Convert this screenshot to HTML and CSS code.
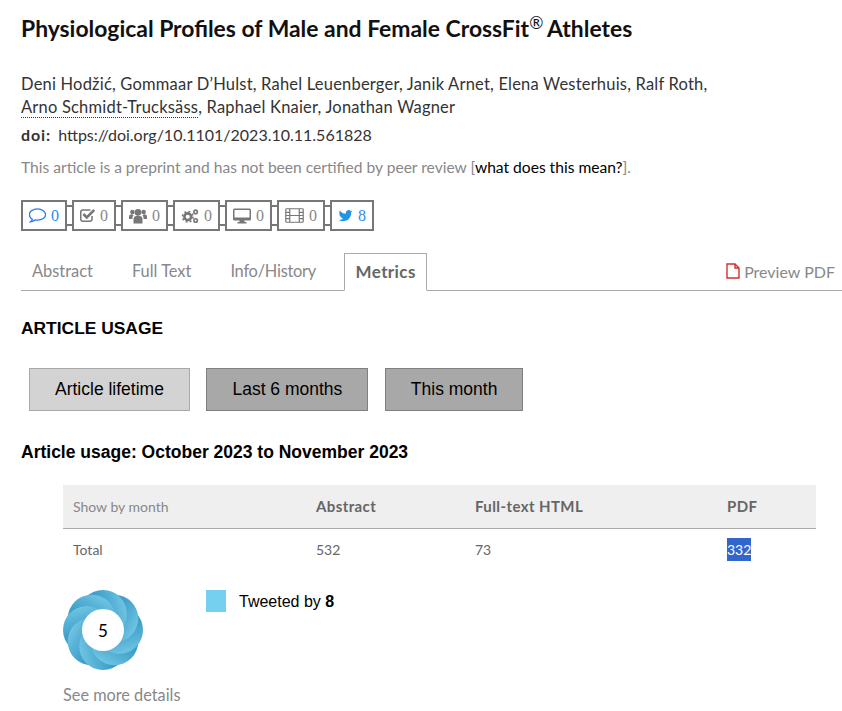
FILE: index.html
```html
<!DOCTYPE html>
<html lang="en">
<head>
<meta charset="utf-8">
<title>Physiological Profiles of Male and Female CrossFit Athletes</title>
<link rel="stylesheet" href="styles.css">
</head>
<body>
<main class="page">
  <h1 class="title">Physiological Profiles of Male and Female CrossFit<sup>®</sup> Athletes</h1>
  <p class="authors">Deni Hodžić, Gommaar D’Hulst, Rahel Leuenberger, Janik Arnet, Elena Westerhuis, Ralf Roth,<br><span class="dotted">Arno Schmidt-Trucksäss</span>, Raphael Knaier, Jonathan Wagner</p>
  <p class="doi"><b>doi:</b> https://doi.org/10.1101/2023.10.11.561828</p>
  <p class="note">This article is a preprint and has not been certified by peer review [<span class="black">what does this mean?</span>].</p>

  <div class="badges">
    <span class="badge blue"><svg class="ic" viewBox="1 3 22 19"><path d="M12 4C6 4 1.500 7.200 1.500 11.500c0 2.500 1.500 4.500 3.800 5.800-.2 1.300-1 2.500-2.300 3.400 2.500-.2 4.700-1.200 6.300-2.600 1 .2 1.800.3 2.700.3 6 0 10.500-3.200 10.500-6.900S18 4 12 4z" fill="none" stroke="#2b7bf0" stroke-width="1.700"/></svg>0</span>
    <i class="link"></i>
    <span class="badge"><svg class="ic slim" viewBox="2 3 20 19"><path d="M18 13v4a3 3 0 0 1-3 3H6a3 3 0 0 1-3-3V8a3 3 0 0 1 3-3h10" fill="none" stroke="#777" stroke-width="2"/><path d="M6.500 10.500 11 15l10-10" fill="none" stroke="#777" stroke-width="3.400"/></svg>0</span>
    <i class="link"></i>
    <span class="badge"><svg class="ic wide" viewBox="0 1 24 22" fill="#777"><circle cx="12" cy="7" r="4.500"/><circle cx="4.500" cy="6.500" r="3"/><circle cx="19.500" cy="6.500" r="3"/><path d="M6 22v-6c0-3 2-4.500 6-4.500s6 1.500 6 4.500v6zM0 16v-3c0-2 1-3.500 4-3.500l2 1.500c-1 1-1.500 3-1.500 5zM24 16v-3c0-2-1-3.500-4-3.500l-2 1.500c1 1 1.500 3 1.500 5z"/></svg>0</span>
    <i class="link"></i>
    <span class="badge"><svg class="ic wide" viewBox="0 0 24 24"><circle cx="9" cy="13" r="4.500" fill="none" stroke="#777" stroke-width="3.400"/><circle cx="9" cy="13" r="7" fill="none" stroke="#777" stroke-width="2.200" stroke-dasharray="2.600 2.900"/><circle cx="19.500" cy="6.500" r="2.300" fill="none" stroke="#777" stroke-width="2.200"/><circle cx="19.500" cy="18" r="2.300" fill="none" stroke="#777" stroke-width="2.200"/></svg>0</span>
    <i class="link"></i>
    <span class="badge"><svg class="ic wide" viewBox="0 1 24 22" fill="#777"><path fill-rule="evenodd" d="M2 2h20a2 2 0 0 1 2 2v12a2 2 0 0 1-2 2h-7l.6 2H18v2H6v-2h2.400l.6-2H2a2 2 0 0 1-2-2V4a2 2 0 0 1 2-2zM2 4v10h20V4z"/></svg>0</span>
    <i class="link"></i>
    <span class="badge"><svg class="ic wider" viewBox="0 3 24 19" fill="none" stroke="#777" stroke-width="1.500"><rect x="1" y="4" width="22" height="17" rx="1"/><path d="M6 4v17M18 4v17M6 12.500h12M1 8.500h5M1 12.500h5M1 16.500h5M18 8.500h5M18 12.500h5M18 16.500h5"/></svg>0</span>
    <i class="link"></i>
    <span class="badge blue"><svg class="ic slim" viewBox="0 2 24 22"><path fill="#2196e8" d="M23 5a10.900 10.900 0 0 1-2.600.9 4.480 4.480 0 0 0-7.860 3v1A10.660 10.660 0 0 1 3 5s-4 9 5 13a11.640 11.640 0 0 1-7 2c9 5 20 0 20-11.500a4.500 4.500 0 0 0-.08-.83A7.720 7.720 0 0 0 23 5z"/></svg>8</span>
  </div>

  <nav class="tabs">
    <a class="tab">Abstract</a>
    <a class="tab">Full Text</a>
    <a class="tab narrow">Info/History</a>
    <a class="tab active">Metrics</a>
    <a class="preview"><svg class="pdf" viewBox="0 0 14 16"><path d="M1 1h8l4 4v10H1zM9 1v4h4" fill="none" stroke="#d32f2f" stroke-width="1.400"/></svg>Preview PDF</a>
  </nav>

  <h2 class="usage-head">ARTICLE USAGE</h2>
  <div class="buttons">
    <button class="btn light">Article lifetime</button>
    <button class="btn dark">Last 6 months</button>
    <button class="btn dark">This month</button>
  </div>
  <h3 class="range">Article usage: October 2023 to November 2023</h3>

  <table class="stats">
    <thead>
      <tr><th class="show">Show by month</th><th>Abstract</th><th>Full-text HTML</th><th>PDF</th></tr>
    </thead>
    <tbody>
      <tr><td>Total</td><td>532</td><td>73</td><td><span class="sel">332</span></td></tr>
    </tbody>
  </table>

  <section class="altmetric">
    <div class="donut-col">
      <div class="donut">
        <svg viewBox="0 0 80 80" width="80" height="80">
          <defs>
            <linearGradient id="g" x1="0.45" y1="0.5" x2="1" y2="0.35">
              <stop offset="0" stop-color="#3f9fc8"/>
              <stop offset="0.5" stop-color="#55b0d5"/>
              <stop offset="1" stop-color="#72c6e4"/>
            </linearGradient>
            <circle id="c" cx="40" cy="24" r="24"/>
            <mask id="m" maskUnits="userSpaceOnUse" x="-40" y="-40" width="160" height="160">
              <rect x="-40" y="-40" width="160" height="160" fill="#fff"/>
              <use href="#c" fill="#000" transform="rotate(-45 40 40)"/>
              <use href="#c" fill="#000" transform="rotate(-90 40 40)"/>
              <use href="#c" fill="#000" transform="rotate(-135 40 40)"/>
            </mask>
            <g id="b" mask="url(#m)"><use href="#c" fill="url(#g)"/></g>
          </defs>
          <circle cx="40" cy="40" r="38" fill="#52afd5"/>
          <use href="#b"/>
          <use href="#b" transform="rotate(45 40 40)"/>
          <use href="#b" transform="rotate(90 40 40)"/>
          <use href="#b" transform="rotate(135 40 40)"/>
          <use href="#b" transform="rotate(180 40 40)"/>
          <use href="#b" transform="rotate(225 40 40)"/>
          <use href="#b" transform="rotate(270 40 40)"/>
          <use href="#b" transform="rotate(315 40 40)"/>
          <circle cx="40" cy="40" r="21" fill="#fff"/>
        </svg>
        <span class="score">5</span>
      </div>
      <a class="more">See more details</a>
    </div>
    <div class="legend"><i class="swatch"></i><span>Tweeted by <b>8</b></span></div>
  </section>
</main>
</body>
</html>
```
FILE: styles.css
```css
* { box-sizing: border-box; }
html, body { margin: 0; padding: 0; background: #fff; }
body { font-family: "Lato", "Liberation Sans", sans-serif; color: #222; overflow: hidden; }
.page { padding: 14px 0 0 21px; width: 842px; height: 711px; overflow: hidden; }
.title { margin: 0; font-size: 22.900px; line-height: 28px; font-weight: 700; color: #111; }
.title sup { font-size: 17px; font-weight: 400; line-height: 0; vertical-align: 8px; margin-right: -1px; }
.authors { margin: 31px 0 0; font-size: 16.500px; letter-spacing: .2px; line-height: 23px; color: #333; }
.dotted { border-bottom: 1px dotted #333; }
.doi { margin: 4px 0 0; font-size: 16px; line-height: 24px; color: #333; }
.doi b { letter-spacing: .9px; margin-right: 3px; }
.note { margin: 8px 0 0; font-size: 15.600px; line-height: 24px; color: #888; }
.black { color: #000; }

.badges { display: flex; align-items: center; margin-top: 21px; height: 31px; }
.badge { display: flex; align-items: center; gap: 5px; height: 31px; padding: 0 6px; border: 2px solid #777; font-family: "Liberation Serif", serif; font-size: 16px; color: #888; white-space: nowrap; }
.badge.blue { color: #2a8cf0; }
.ic { width: 17px; height: 17px; flex: none; }
.ic.slim { width: 15px; height: 15px; }
.ic.wide { width: 18px; height: 18px; }
.ic.wider { width: 19px; height: 17px; }
.link { width: 5px; height: 21px; border-top: 2px solid #777; border-bottom: 2px solid #777; }

.tabs { display: flex; align-items: flex-end; margin-top: 22px; height: 38px; border-bottom: 1px solid #aaa; font-size: 16.400px; color: #888; }
.tab { height: 38px; line-height: 37px; padding: 0 11px; margin-right: 17px; }
.tab.narrow { letter-spacing: -.25px; }
.tab.active { margin: 0 0 -1px 0; height: 38px; border: 1px solid #aaa; border-bottom-color: #fff; font-size: 17px; line-height: 36px; padding: 0 10.500px; letter-spacing: .4px; font-weight: 700; color: #666; }
.preview { margin-left: auto; height: 38px; line-height: 37px; padding-right: 7px; display: flex; align-items: center; gap: 4px; font-size: 16px; }
.pdf { width: 14px; height: 16px; }

.usage-head { margin: 27px 0 0; font-family: "Liberation Sans", sans-serif; font-size: 17.400px; line-height: 20px; font-weight: 700; color: #000; }
.buttons { display: flex; gap: 16.500px; margin: 30px 0 0 8px; }
.btn { height: 43px; border: 1px solid #808080; padding: 0 25px; font-family: "Liberation Sans", sans-serif; font-size: 17.500px; color: #000; }
.btn.light { background: #d3d3d3; border-color: #a9a9a9; }
.btn.dark { background: #a8a8a8; }
.range { margin: 30px 0 0; font-family: "Liberation Sans", sans-serif; font-size: 17.500px; line-height: 22px; font-weight: 700; color: #000; }

.stats { margin: 22px 0 0 42px; width: 753px; border-collapse: collapse; table-layout: fixed; font-size: 14px; color: #666; }
.stats th { height: 43px; background: #efefef; border-bottom: 1px solid #aaa; padding: 0 10px; text-align: left; font-size: 15px; letter-spacing: .4px; font-weight: 700; }
.stats th.show { font-size: 14px; letter-spacing: 0; font-weight: 400; color: #888; width: 243px; }
.stats th:nth-child(2) { width: 159px; }
.stats th:nth-child(3) { width: 252px; }
.stats td { height: 44px; padding: 0 10px 2px; }
.sel { display: inline-block; background: #3366cc; color: #fff; line-height: 23px; }

.altmetric { display: flex; margin: 18px 0 0 42px; }
.donut-col { width: 143px; }
.donut { position: relative; width: 80px; height: 80px; }
.donut svg { display: block; }
.score { position: absolute; inset: 0; display: flex; align-items: center; justify-content: center; font-size: 17px; color: #000; }
.more { display: block; margin-top: 15px; font-size: 16.300px; color: #888; line-height: 20px; }
.legend { display: flex; gap: 13px; font-family: "Liberation Sans", sans-serif; font-size: 16px; line-height: 24px; color: #000; }
.swatch { display: block; width: 20px; height: 22px; background: #74d0ee; }
```
